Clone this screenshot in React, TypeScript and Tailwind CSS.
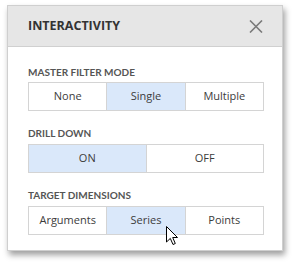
import React from "react";

const font = { fontFamily: '"Open Sans", "Noto Sans", sans-serif' };
const labelFont = { fontFamily: 'Lato, "Open Sans", sans-serif' };

function Group({ items, active }: { items: string[]; active: number }) {
  return (
    <div className="flex w-[236px] h-[29px] border border-[#d4d4d4] bg-white">
      {items.map((it, i) => (
        <div
          key={it}
          className={
            "flex-1 flex items-center justify-center text-[11px] text-[#3c3c3c] " +
            (i > 0 ? "border-l border-[#d4d4d4] " : "") +
            (i === active ? "bg-[#dae8fa]" : "bg-white")
          }
        >
          {it}
        </div>
      ))}
    </div>
  );
}

function Label({ children }: { children: React.ReactNode }) {
  return (
    <div className="h-[14px] leading-[14px] text-[10px] font-bold text-[#555555]" style={labelFont}>
      {children}
    </div>
  );
}

export default function App() {
  return (
    <div className="w-[296px] h-[267px] bg-white pt-[5px] pl-[7px] relative" style={font}>
      <div className="w-[276px] border border-[#cfcfcf] bg-white shadow-[2px_4px_6px_rgba(0,0,0,0.38)]">
        <div className="h-[41px] bg-[#e6e6e6] border-b border-[#d0d0d0] flex items-center justify-between pl-[20px] pr-[19px]">
          <span className="text-[12.5px] font-bold text-[#333333]">INTERACTIVITY</span>
          <svg width="14" height="13" viewBox="0 0 14 13">
            <path d="M1 0.5 L13 12.5 M13 0.5 L1 12.5" stroke="#7a7a7a" strokeWidth="1.6" />
          </svg>
        </div>
        <div className="pl-[20px] pt-[18px] pb-[15px]">
          <Label>MASTER FILTER MODE</Label>
          <div className="mt-[3px]">
            <Group items={["None", "Single", "Multiple"]} active={1} />
          </div>
          <div className="mt-[15px]">
            <Label>DRILL DOWN</Label>
          </div>
          <div className="mt-[4px]">
            <Group items={["ON", "OFF"]} active={0} />
          </div>
          <div className="mt-[15px]">
            <Label>TARGET DIMENSIONS</Label>
          </div>
          <div className="mt-[4px]">
            <Group items={["Arguments", "Series", "Points"]} active={1} />
          </div>
        </div>
      </div>
      <svg className="absolute left-[166px] top-[226px]" width="13" height="20" viewBox="0 0 13 20">
        <path
          d="M0.5 0.5 L0.5 16 L4.3 12.4 L7 18.5 L9.3 17.5 L6.7 11.5 L11.5 11.5 Z"
          fill="white"
          stroke="black"
          strokeWidth="1"
          strokeLinejoin="miter"
        />
      </svg>
    </div>
  );
}
